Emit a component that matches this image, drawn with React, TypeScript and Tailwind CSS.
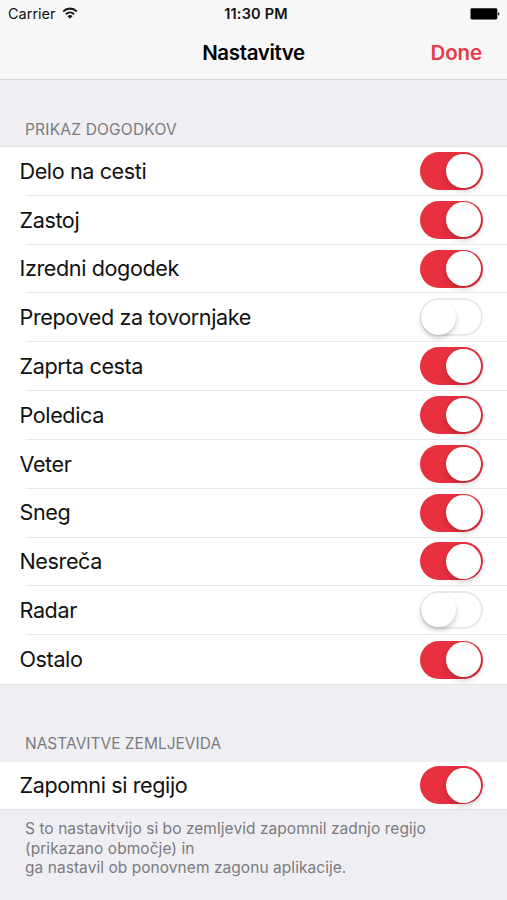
import { useState } from "react";
import clsx from "clsx";

type Setting = {
  label: string;
  enabled: boolean;
};

const events: Setting[] = [
  { label: "Delo na cesti", enabled: true },
  { label: "Zastoj", enabled: true },
  { label: "Izredni dogodek", enabled: true },
  { label: "Prepoved za tovornjake", enabled: false },
  { label: "Zaprta cesta", enabled: true },
  { label: "Poledica", enabled: true },
  { label: "Veter", enabled: true },
  { label: "Sneg", enabled: true },
  { label: "Nesreča", enabled: true },
  { label: "Radar", enabled: false },
  { label: "Ostalo", enabled: true },
];

function WifiIcon() {
  return (
    <svg className="mb-0.5 ml-1.5 h-3 w-4" viewBox="0 0 16 12" fill="none">
      <path d="M1.2 4.4a9.8 9.8 0 0 1 13.6 0" stroke="#1c1c1c" strokeWidth="2.1" />
      <path d="M3.9 7.2a6 6 0 0 1 8.2 0" stroke="#1c1c1c" strokeWidth="2" />
      <path d="M8 11.8 5.5 9.3a3.6 3.6 0 0 1 5 0z" fill="#1c1c1c" />
    </svg>
  );
}

function BatteryIcon() {
  return (
    <svg className="h-3 w-[30px]" viewBox="0 0 30 12">
      <rect x="0.5" y="0.3" width="26.8" height="11.2" rx="1.4" fill="#000" />
      <path d="M28.2 4c1.7.5 1.7 3.3 0 3.8z" fill="#000" />
    </svg>
  );
}

function Toggle({ enabled, label }: { enabled: boolean; label: string }) {
  const [on, setOn] = useState(enabled);

  return (
    <button
      role="switch"
      aria-checked={on}
      aria-label={label}
      onClick={() => setOn(!on)}
      className={clsx(
        "flex h-[38px] w-[62.5px] shrink-0 items-center rounded-full",
        on
          ? "justify-end bg-[#e8303f] pr-[2px]"
          : "justify-start bg-white inset-ring-2 inset-ring-[#e8e8e9] pl-[1px]",
      )}
    >
      <span
        className={clsx(
          "size-[34.5px] rounded-full bg-white",
          on
            ? "shadow-[0_3px_6px_rgba(0,0,0,0.2)]"
            : "shadow-[0_3px_5px_rgba(0,0,0,0.22)]",
        )}
      />
    </button>
  );
}

function SettingRow({ label, enabled, last }: Setting & { last?: boolean }) {
  return (
    <li className="flex h-[48.82px] flex-col bg-white">
      <div className="flex flex-1 items-center justify-between pr-[24.5px] pl-[19.5px]">
        <span className="text-[21.6px] tracking-[-0.4px]">{label}</span>
        <Toggle enabled={enabled} label={label} />
      </div>
      {!last && <div className="ml-[26px] h-px bg-[#e8e8ea]" />}
    </li>
  );
}

export default function App() {
  return (
    <div className="flex h-[900px] w-[507px] flex-col overflow-hidden bg-[#efeef3] font-['Inter',sans-serif] text-[#111]">
      <header className="h-20 border-b border-[#d9d9dc] bg-[#f7f7f8]">
        <div className="grid h-7 grid-cols-3 items-center pr-[7px] pl-2">
          <div className="flex items-center text-[14.5px]">
            Carrier
            <WifiIcon />
          </div>
          <p className="pl-1 text-center text-[14.5px] font-semibold tracking-[0.2px]">
            11:30 PM
          </p>
          <div className="flex justify-end">
            <BatteryIcon />
          </div>
        </div>
        <div className="grid h-[51px] grid-cols-3 items-center pr-[25px] pl-5">
          <h1 className="col-start-2 pl-[5px] text-center text-[20.5px] font-semibold tracking-[-0.35px] text-black">
            Nastavitve
          </h1>
          <button className="justify-self-end text-[20.5px] font-semibold tracking-[-0.1px] text-[#e53b4a]">
            Done
          </button>
        </div>
      </header>

      <section>
        <h2 className="flex h-[66px] items-end pb-[5px] pl-[25px] text-[15.5px] tracking-[0.2px] text-[#7b7b80]">
          PRIKAZ DOGODKOV
        </h2>
        <ul className="border-y border-[#e2e2e5]">
          {events.map((event, i) => (
            <SettingRow
              key={event.label}
              {...event}
              last={i === events.length - 1}
            />
          ))}
        </ul>
      </section>

      <section>
        <h2 className="flex h-[77px] items-end pb-[7px] pl-[25px] text-[15.5px] text-[#7b7b80]">
          NASTAVITVE ZEMLJEVIDA
        </h2>
        <div className="flex h-12 items-center justify-between border-b border-[#e2e2e5] bg-white pr-[24.5px] pl-[19.5px]">
          <span className="text-[21.6px] tracking-[-0.4px]">
            Zapomni si regijo
          </span>
          <Toggle enabled label="Zapomni si regijo" />
        </div>
        <p className="pt-[9px] pl-[25px] text-[15.5px] leading-[19.6px] tracking-[0.05px] text-[#7b7b80]">
          S to nastavitvijo si bo zemljevid zapomnil zadnjo regijo
          <br />
          (prikazano območje) in
          <br />
          ga nastavil ob ponovnem zagonu aplikacije.
        </p>
      </section>
    </div>
  );
}
